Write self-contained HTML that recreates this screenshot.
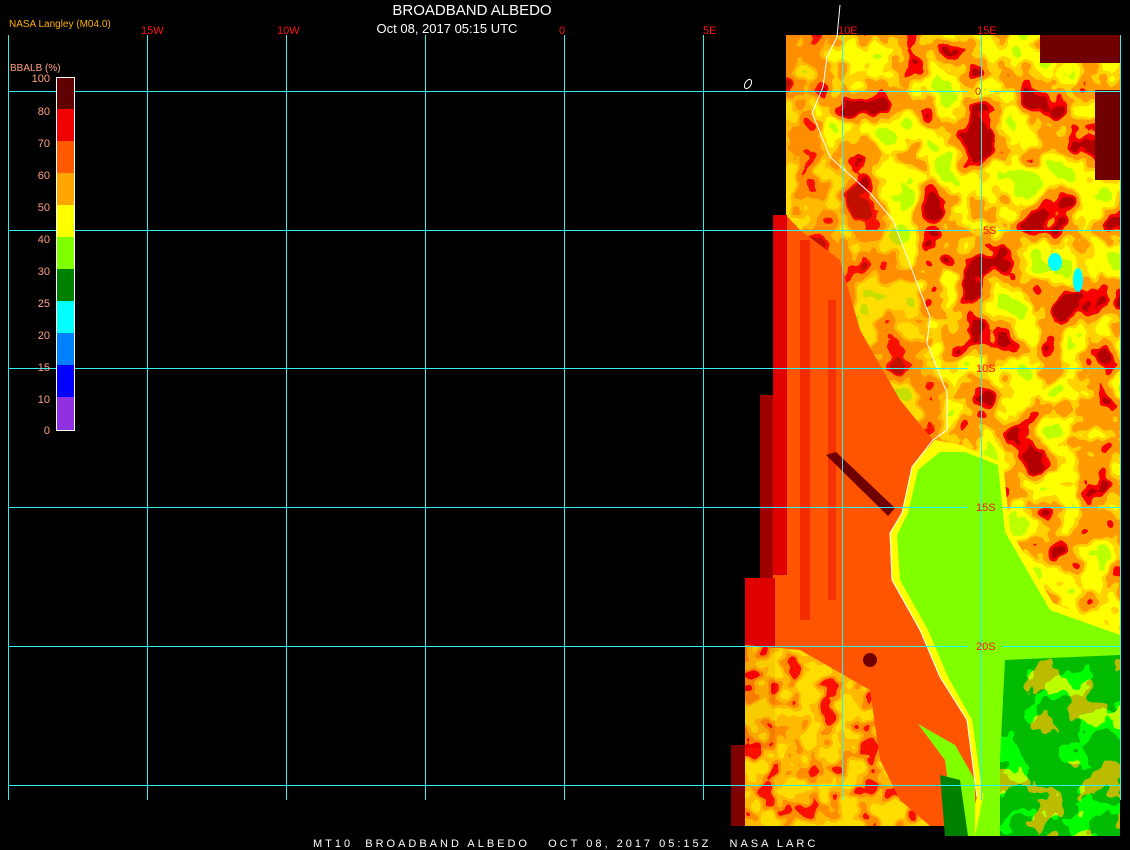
<!DOCTYPE html>
<html><head><style>
html,body{margin:0;padding:0;background:#000;width:1130px;height:850px;overflow:hidden}
svg{display:block}
text{font-family:"Liberation Sans",sans-serif}
</style></head><body>
<svg width="1130" height="850" viewBox="0 0 1130 850" xmlns="http://www.w3.org/2000/svg">
<defs>
<filter id="n1" x="0" y="0" width="100%" height="100%">
<feTurbulence type="fractalNoise" baseFrequency="0.025" numOctaves="3" seed="4" result="t"/>
<feColorMatrix in="t" type="matrix" values="1 0 0 0 0  1 0 0 0 0  1 0 0 0 0  0 0 0 0 1" result="g"/>
<feComponentTransfer in="g" result="s">
<feFuncR type="linear" slope="2" intercept="-0.5"/>
<feFuncG type="linear" slope="2" intercept="-0.5"/>
<feFuncB type="linear" slope="2" intercept="-0.5"/>
</feComponentTransfer>
<feComponentTransfer in="s">
<feFuncR type="discrete" tableValues="0.45 0.95 1 1 1 1 1 0.5"/>
<feFuncG type="discrete" tableValues="0 0 0.33 0.33 0.65 1 1 1"/>
<feFuncB type="discrete" tableValues="0 0 0 0 0 0 0 0"/>
<feFuncA type="linear" slope="0" intercept="1"/>
</feComponentTransfer>
<feComposite in2="SourceGraphic" operator="in"/>
</filter>
<filter id="n3" x="0" y="0" width="100%" height="100%">
<feTurbulence type="fractalNoise" baseFrequency="0.05" numOctaves="2" seed="2" result="t"/>
<feColorMatrix in="t" type="matrix" values="1 0 0 0 0  1 0 0 0 0  1 0 0 0 0  0 0 0 0 1" result="g"/>
<feComponentTransfer in="g" result="s">
<feFuncR type="linear" slope="2" intercept="-0.5"/>
<feFuncG type="linear" slope="2" intercept="-0.5"/>
<feFuncB type="linear" slope="2" intercept="-0.5"/>
</feComponentTransfer>
<feComponentTransfer in="s">
<feFuncR type="discrete" tableValues="0.95 1 1 1 1"/>
<feFuncG type="discrete" tableValues="0 0.33 0.65 1 1"/>
<feFuncB type="discrete" tableValues="0 0 0 0 0"/>
<feFuncA type="linear" slope="0" intercept="1"/>
</feComponentTransfer>
<feComposite in2="SourceGraphic" operator="in"/>
</filter>
<filter id="n2" x="0" y="0" width="100%" height="100%">
<feTurbulence type="fractalNoise" baseFrequency="0.03" numOctaves="3" seed="9" result="t"/>
<feComponentTransfer in="t">
<feFuncR type="discrete" tableValues="0 0 0 0.5 0.5"/>
<feFuncG type="discrete" tableValues="0.5 0.5 0.5 1 1"/>
<feFuncB type="discrete" tableValues="0 0 0 0 0"/>
<feFuncA type="linear" slope="0" intercept="1"/>
</feComponentTransfer>
<feComposite in2="SourceGraphic" operator="in"/>
</filter>
</defs>

<polygon points="786,35 1120,35 1120,836 966,836 966,826 731,826 731,745 745,745 745,578 760,578 760,395 773,395 773,215 786,215" fill="#ff5500"/>
<polygon points="786,35 1120,35 1120,836 966,836 977,797 967,720 940,677 920,630 892,580 890,533 902,513 912,467 933,440 947,430 947,393 927,343 930,317 907,257 893,220 870,193 830,157 812,113 823,87 827,57 837,37" fill="#000" filter="url(#n1)"/>
<polygon points="786,35 837,37 827,57 823,87 812,113 830,157 870,193 893,220 907,257 930,317 927,343 947,393 947,430 933,440 900,400 860,330 840,260 800,230 786,215" fill="#000" filter="url(#n1)" opacity="0.8"/>
<rect x="773" y="215" width="14" height="360" fill="#e00000"/>
<rect x="800" y="240" width="10" height="380" fill="#ee1100" opacity="0.6"/>
<rect x="828" y="300" width="8" height="300" fill="#ee1100" opacity="0.5"/>
<rect x="760" y="395" width="13" height="183" fill="#a00000"/>
<rect x="745" y="578" width="30" height="170" fill="#e00000"/>
<rect x="731" y="745" width="14" height="81" fill="#800000"/>
<polygon points="826,455 836,452 895,508 888,516" fill="#700000"/>
<polygon points="745,645 800,650 870,690 880,760 900,800 930,826 745,826" fill="#000" filter="url(#n3)" opacity="0.8"/>
<ellipse cx="870" cy="660" rx="7" ry="7" fill="#700000"/>
<polygon points="935,440 912,467 902,513 890,533 892,580 920,630 940,677 967,720 977,797 966,836 1120,836 1120,630 1053,603 1010,530 1003,463 960,445" fill="#ffff00"/>
<polygon points="940,452 918,470 908,513 897,535 900,580 928,630 948,677 972,720 983,797 975,836 1120,836 1120,635 1050,610 1005,532 998,465 965,452" fill="#80ff00"/>
<polygon points="918,724 945,760 955,836 975,836 975,780 955,745" fill="#80ff00"/>
<polygon points="1005,660 1120,655 1120,836 1000,836 1000,760" fill="#000" filter="url(#n2)"/>
<polygon points="940,775 960,780 968,836 945,836" fill="#008000"/>
<rect x="1040" y="35" width="80" height="28" fill="#700000"/>
<rect x="1095" y="90" width="25" height="90" fill="#700000"/>
<ellipse cx="1055" cy="262" rx="7" ry="9" fill="#00ffff"/>
<ellipse cx="1078" cy="280" rx="5" ry="12" fill="#00ffff"/>

<polyline points="840,5 837,37 827,57 823,87 812,113 830,157 870,193 893,220 907,257 930,317 927,343 947,393 947,430 933,440 912,467 902,513 890,533 892,580 920,630 940,677 967,720 977,797" fill="none" stroke="#fff" stroke-width="1"/>
<ellipse cx="748" cy="84" rx="3" ry="5" transform="rotate(30 748 84)" fill="none" stroke="#fff" stroke-width="1"/>

<g stroke="#2ff0f0" stroke-width="1" fill="none">
<line x1="8.5" y1="35" x2="8.5" y2="800"/>
<line x1="147.5" y1="35" x2="147.5" y2="800"/>
<line x1="286.5" y1="35" x2="286.5" y2="800"/>
<line x1="425.5" y1="35" x2="425.5" y2="800"/>
<line x1="564.5" y1="35" x2="564.5" y2="800"/>
<line x1="703.5" y1="35" x2="703.5" y2="800"/>
<line x1="842.5" y1="35" x2="842.5" y2="800"/>
<line x1="981.5" y1="35" x2="981.5" y2="800"/>
<line x1="1120.5" y1="35" x2="1120.5" y2="800"/>
<line x1="8" y1="91.5" x2="968" y2="91.5"/><line x1="990" y1="91.5" x2="1120" y2="91.5"/>
<line x1="8" y1="230.5" x2="970" y2="230.5"/><line x1="998" y1="230.5" x2="1120" y2="230.5"/>
<line x1="8" y1="368.5" x2="968" y2="368.5"/><line x1="1000" y1="368.5" x2="1120" y2="368.5"/>
<line x1="8" y1="507.5" x2="968" y2="507.5"/><line x1="1002" y1="507.5" x2="1120" y2="507.5"/>
<line x1="8" y1="646.5" x2="968" y2="646.5"/><line x1="1002" y1="646.5" x2="1120" y2="646.5"/>
<line x1="8" y1="785.5" x2="1120" y2="785.5"/>
</g>

<g fill="#ff1010" font-size="11">
<text x="141" y="34">15W</text>
<text x="277" y="34">10W</text>
<text x="559" y="34">0</text>
<text x="703" y="34">5E</text>
<text x="838" y="34">10E</text>
<text x="977" y="34">15E</text>
<text x="975" y="95">0</text>
<text x="983" y="234">5S</text>
<text x="976" y="372">10S</text>
<text x="976" y="511">15S</text>
<text x="976" y="650">20S</text>
</g>
<text x="472" y="15" fill="#fff" font-size="15" text-anchor="middle">BROADBAND ALBEDO</text>
<text x="447" y="33" fill="#fff" font-size="13" text-anchor="middle">Oct 08, 2017 05:15 UTC</text>
<text x="9" y="27" fill="#ffb000" font-size="10">NASA Langley (M04.0)</text>
<text x="10" y="71" fill="#ffa080" font-size="10">BBALB (%)</text>

<g>
<rect x="56" y="77" width="18" height="32" fill="#600000"/>
<rect x="56" y="109" width="18" height="32" fill="#f00000"/>
<rect x="56" y="141" width="18" height="32" fill="#ff5a00"/>
<rect x="56" y="173" width="18" height="32" fill="#ffa500"/>
<rect x="56" y="205" width="18" height="32" fill="#ffff00"/>
<rect x="56" y="237" width="18" height="32" fill="#80ff00"/>
<rect x="56" y="269" width="18" height="32" fill="#008000"/>
<rect x="56" y="301" width="18" height="32" fill="#00ffff"/>
<rect x="56" y="333" width="18" height="32" fill="#0080ff"/>
<rect x="56" y="365" width="18" height="32" fill="#0000ff"/>
<rect x="56" y="397" width="18" height="33" fill="#9030e0"/>
<rect x="56.5" y="77.5" width="18" height="353" fill="none" stroke="#fff" stroke-width="1"/>
</g>
<g fill="#ffa080" font-size="11" text-anchor="end">
<text x="50" y="82">100</text>
<text x="50" y="115">80</text>
<text x="50" y="147">70</text>
<text x="50" y="179">60</text>
<text x="50" y="211">50</text>
<text x="50" y="243">40</text>
<text x="50" y="275">30</text>
<text x="50" y="307">25</text>
<text x="50" y="339">20</text>
<text x="50" y="371">15</text>
<text x="50" y="403">10</text>
<text x="50" y="434">0</text>
</g>

<text x="313" y="847" fill="#fff" font-size="11" font-family="Liberation Mono, monospace" letter-spacing="3" xml:space="preserve">MT10  BROADBAND ALBEDO   OCT 08, 2017 05:15Z   NASA LARC</text>
</svg>
</body></html>
